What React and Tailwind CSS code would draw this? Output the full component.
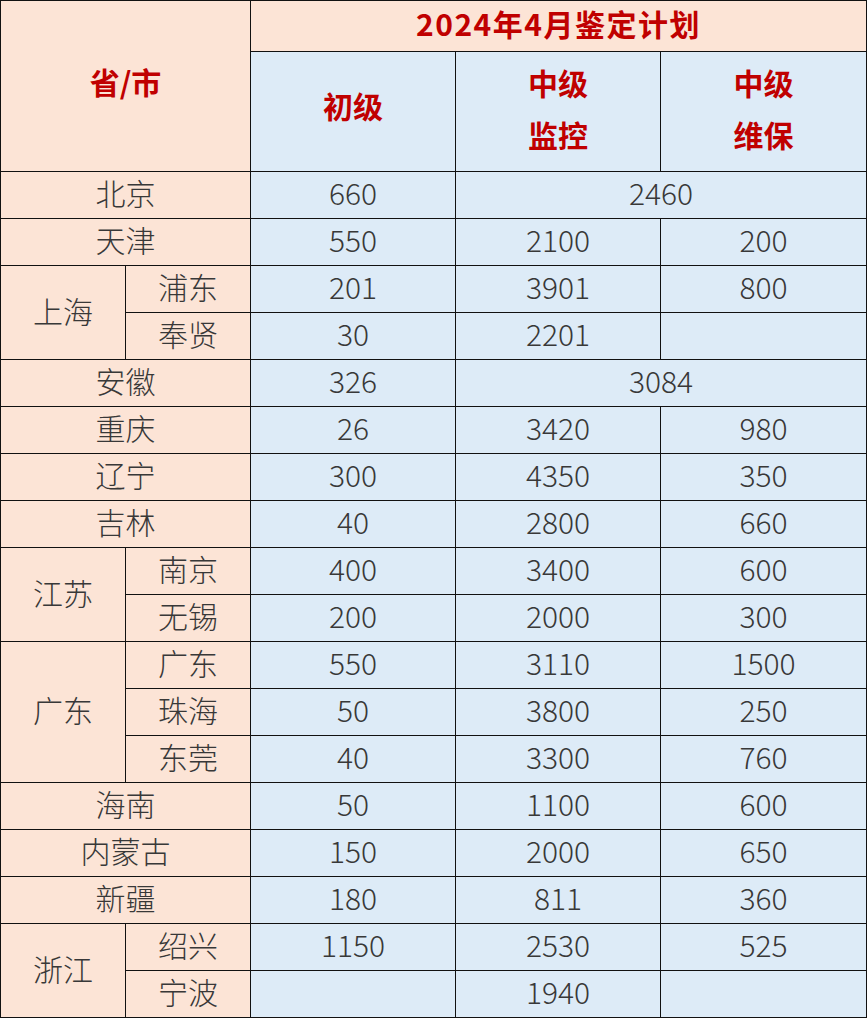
const P = "bg-[#fce4d6]";
const B = "bg-[#ddebf7]";

function Cell({ className = "", children }) {
  return (
    <div className={`flex items-center justify-center ${className}`}>{children}</div>
  );
}

const rows = [
  [{ t: "北京", c: "col-span-2", bg: P }, { t: "660" }, { t: "2460", c: "col-span-2" }],
  [{ t: "天津", c: "col-span-2", bg: P }, { t: "550" }, { t: "2100" }, { t: "200" }],
  [{ t: "上海", c: "row-span-2", bg: P }, { t: "浦东", bg: P }, { t: "201" }, { t: "3901" }, { t: "800" }],
  [{ t: "奉贤", bg: P }, { t: "30" }, { t: "2201" }, { t: "" }],
  [{ t: "安徽", c: "col-span-2", bg: P }, { t: "326" }, { t: "3084", c: "col-span-2" }],
  [{ t: "重庆", c: "col-span-2", bg: P }, { t: "26" }, { t: "3420" }, { t: "980" }],
  [{ t: "辽宁", c: "col-span-2", bg: P }, { t: "300" }, { t: "4350" }, { t: "350" }],
  [{ t: "吉林", c: "col-span-2", bg: P }, { t: "40" }, { t: "2800" }, { t: "660" }],
  [{ t: "江苏", c: "row-span-2", bg: P }, { t: "南京", bg: P }, { t: "400" }, { t: "3400" }, { t: "600" }],
  [{ t: "无锡", bg: P }, { t: "200" }, { t: "2000" }, { t: "300" }],
  [{ t: "广东", c: "row-span-3", bg: P }, { t: "广东", bg: P }, { t: "550" }, { t: "3110" }, { t: "1500" }],
  [{ t: "珠海", bg: P }, { t: "50" }, { t: "3800" }, { t: "250" }],
  [{ t: "东莞", bg: P }, { t: "40" }, { t: "3300" }, { t: "760" }],
  [{ t: "海南", c: "col-span-2", bg: P }, { t: "50" }, { t: "1100" }, { t: "600" }],
  [{ t: "内蒙古", c: "col-span-2", bg: P }, { t: "150" }, { t: "2000" }, { t: "650" }],
  [{ t: "新疆", c: "col-span-2", bg: P }, { t: "180" }, { t: "811" }, { t: "360" }],
  [{ t: "浙江", c: "row-span-2", bg: P }, { t: "绍兴", bg: P }, { t: "1150" }, { t: "2530" }, { t: "525" }],
  [{ t: "宁波", bg: P }, { t: "" }, { t: "1940" }, { t: "" }],
];

export default function App() {
  return (
    <div className="bg-white w-[867px] h-[1019px]" style={{ fontFamily: '"Noto Sans CJK SC", "Noto Sans", sans-serif' }}>
      <div className="grid w-fit bg-[#111] p-px gap-px grid-cols-[124px_124px_204px_204px_205px] grid-rows-[50px_119px_repeat(18,46px)] text-[30px] text-[#383838]">
        <Cell className={`${P} col-span-2 row-span-2 font-bold text-[#c00000] pb-[10px]`}>省/市</Cell>
        <Cell className={`${P} col-span-3 font-bold text-[#c00000] tracking-[1.5px] leading-none pb-[6px]`}>2024年4月鉴定计划</Cell>
        <Cell className={`${B} font-bold text-[#c00000] pb-[12px]`}>初级</Cell>
        <Cell className={`${B} font-bold text-[#c00000] flex-col leading-[52px] pb-[8px]`}>
          <span>中级</span>
          <span>监控</span>
        </Cell>
        <Cell className={`${B} font-bold text-[#c00000] flex-col leading-[52px] pb-[8px]`}>
          <span>中级</span>
          <span>维保</span>
        </Cell>
        {rows.flatMap((r, i) =>
          r.map((c, j) => (
            <Cell key={`${i}-${j}`} className={`${c.bg || B} ${c.c || ""} leading-none font-light pb-[6px]`}>
              {c.t}
            </Cell>
          ))
        )}
      </div>
    </div>
  );
}
